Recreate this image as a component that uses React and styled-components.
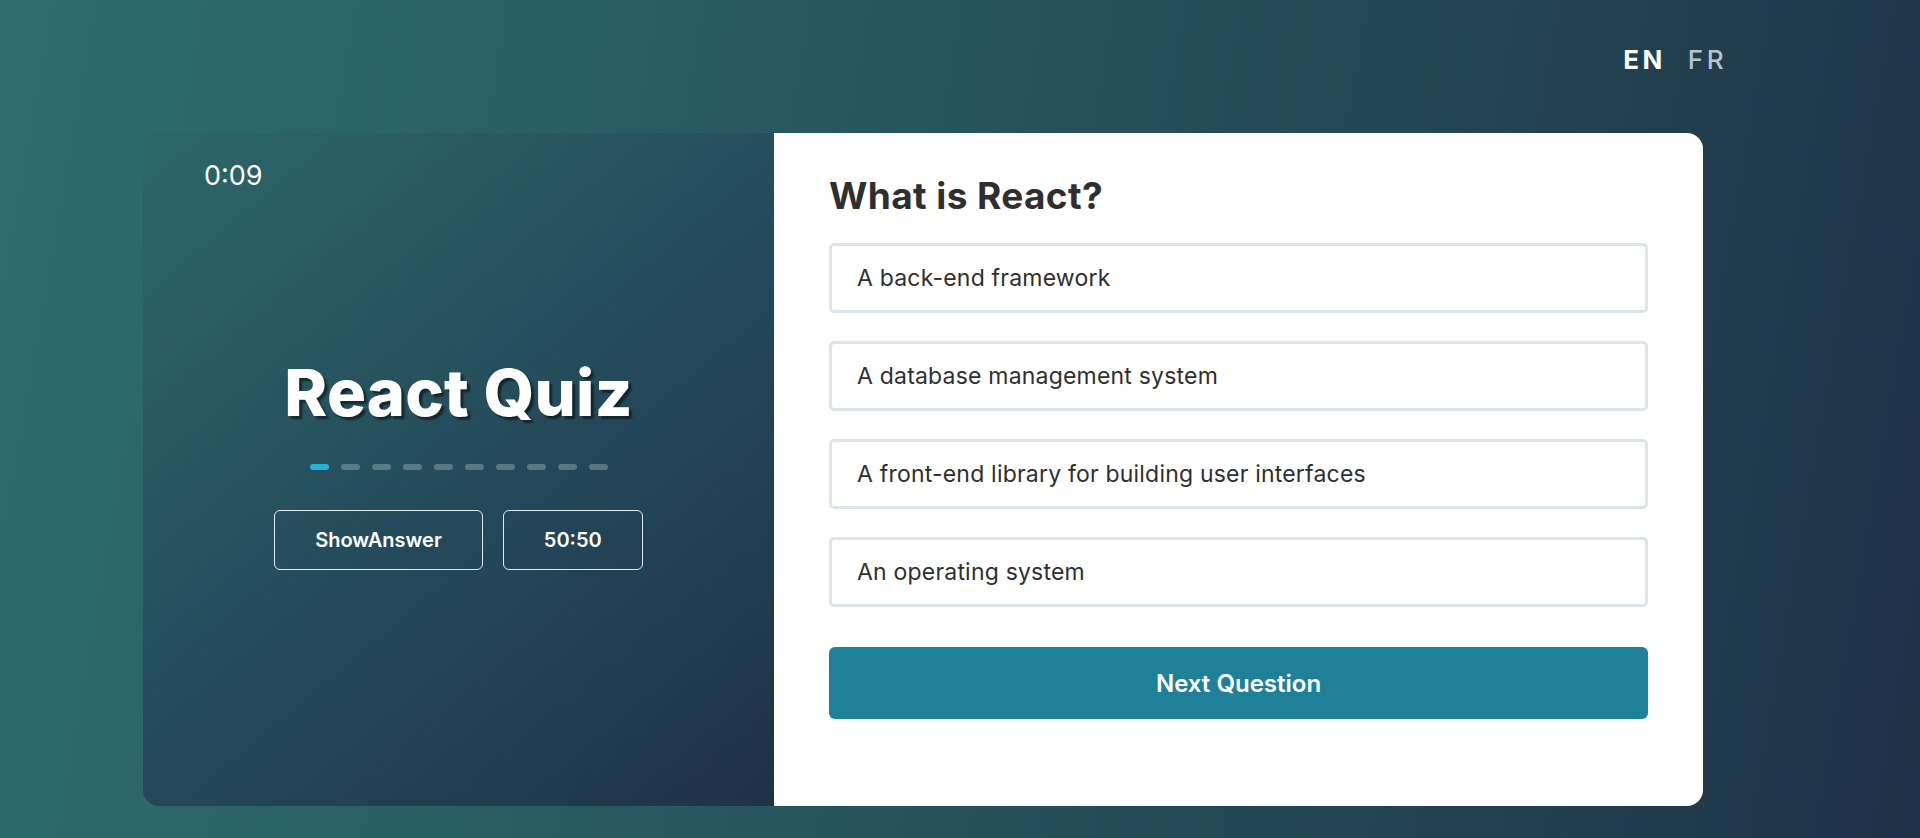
import React, { useState } from "react";
import styled, { createGlobalStyle } from "styled-components";

const GlobalStyle = createGlobalStyle`
  * {
    box-sizing: border-box;
  }
  body {
    margin: 0;
    font-family: Inter, "Noto Sans", sans-serif;
    background: linear-gradient(100deg, #2e6e6d 0%, #25505a 55%, #1f3247 100%);
    min-height: 100vh;
  }
`;

const question = {
  title: "What is React?",
  options: [
    "A back-end framework",
    "A database management system",
    "A front-end library for building user interfaces",
    "An operating system",
  ],
};

const App = () => {
  const [lang, setLang] = useState("EN");
  const [selected, setSelected] = useState(null);
  const current = 0;

  return (
    <>
      <GlobalStyle />
      <Page>
        <LangBar>
          {["EN", "FR"].map((l) => (
            <LangButton key={l} $active={lang === l} onClick={() => setLang(l)}>
              {l}
            </LangButton>
          ))}
        </LangBar>
        <Card>
          <LeftPanel>
            <Timer>0:09</Timer>
            <Hero>
              <QuizTitle>React Quiz</QuizTitle>
              <Steps>
                {Array.from({ length: 10 }).map((_, i) => (
                  <Step key={i} $active={i === current} />
                ))}
              </Steps>
              <Helpers>
                <HelperButton>ShowAnswer</HelperButton>
                <HelperButton>50:50</HelperButton>
              </Helpers>
            </Hero>
          </LeftPanel>
          <RightPanel>
            <QuestionTitle>{question.title}</QuestionTitle>
            <Options>
              {question.options.map((option, i) => (
                <Option
                  key={option}
                  $selected={selected === i}
                  onClick={() => setSelected(i)}
                >
                  {option}
                </Option>
              ))}
            </Options>
            <NextButton>Next Question</NextButton>
          </RightPanel>
        </Card>
      </Page>
    </>
  );
};

const Page = styled.div`
  min-height: 100vh;
  display: flex;
  flex-direction: column;
  padding: 44px 193px 32px 143px;
`;

const LangBar = styled.div`
  display: flex;
  justify-content: flex-end;
  gap: 22px;
`;

const LangButton = styled.button`
  background: none;
  border: none;
  padding: 0;
  font-family: inherit;
  font-size: 26px;
  line-height: 32px;
  letter-spacing: 3.5px;
  font-weight: ${(p) => (p.$active ? 700 : 500)};
  color: ${(p) => (p.$active ? "#ffffff" : "#b9c5cc")};
  cursor: pointer;
`;

const Card = styled.div`
  margin-top: 57px;
  width: 1560px;
  height: 673px;
  display: flex;
  border-radius: 16px;
  overflow: hidden;
`;

const LeftPanel = styled.div`
  width: 631px;
  flex-shrink: 0;
  padding: 27px 61px;
  background: linear-gradient(140deg, #2d6767 0%, #24495a 55%, #1f3147 100%);
  color: #fff;
`;

const Timer = styled.div`
  font-size: 27px;
  line-height: 32px;
`;

const Hero = styled.div`
  margin-top: 162px;
  display: flex;
  flex-direction: column;
  align-items: center;
`;

const QuizTitle = styled.h1`
  margin: 0;
  font-size: 65px;
  line-height: 77px;
  font-weight: 800;
  letter-spacing: 0.2px;
  text-shadow: 3px 3px 2px rgba(0, 0, 0, 0.5);
`;

const Steps = styled.div`
  display: flex;
  gap: 12px;
  margin-top: 33px;
`;

const Step = styled.span`
  width: 19px;
  height: 6px;
  border-radius: 3px;
  background: ${(p) => (p.$active ? "#27b2da" : "rgba(255, 255, 255, 0.25)")};
`;

const Helpers = styled.div`
  display: flex;
  gap: 20px;
  margin-top: 40px;
`;

const HelperButton = styled.button`
  height: 60px;
  padding: 0 40px;
  background: transparent;
  border: 1px solid #e4eaec;
  border-radius: 6px;
  color: #fff;
  font-family: inherit;
  font-size: 20px;
  font-weight: 600;
  cursor: pointer;
`;

const RightPanel = styled.div`
  flex: 1;
  background: #fff;
  padding: 42px 55px 0 55px;
`;

const QuestionTitle = styled.h2`
  margin: 0;
  font-size: 37px;
  line-height: 42px;
  font-weight: 700;
  letter-spacing: 0.4px;
  color: #2f2f2f;
`;

const Options = styled.div`
  display: flex;
  flex-direction: column;
  gap: 28px;
  margin-top: 26px;
`;

const Option = styled.div`
  height: 70px;
  display: flex;
  align-items: center;
  padding: 0 25px;
  border: 3px solid ${(p) => (p.$selected ? "#1f8197" : "#dde5eb")};
  border-radius: 5px;
  font-size: 23px;
  letter-spacing: 0.2px;
  color: #2f2f2f;
  cursor: pointer;
`;

const NextButton = styled.button`
  width: 100%;
  height: 72px;
  margin-top: 40px;
  border: none;
  border-radius: 6px;
  background: #1f8197;
  color: #fff;
  font-family: inherit;
  font-size: 24px;
  font-weight: 600;
  cursor: pointer;
`;

export default App;
